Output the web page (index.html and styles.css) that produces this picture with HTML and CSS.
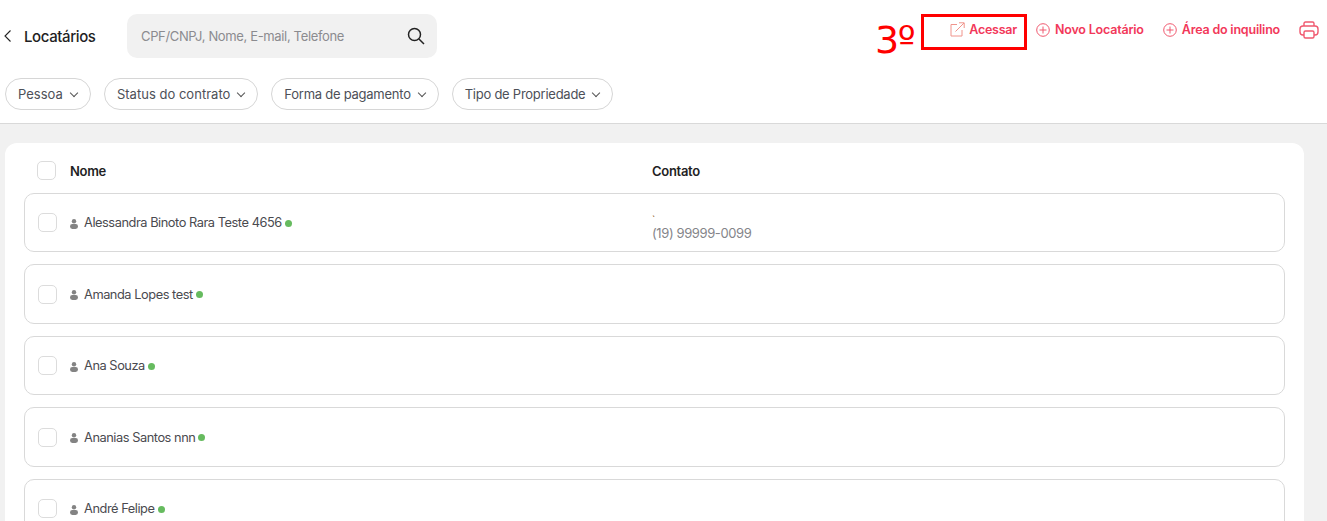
FILE: index.html

```html
<!DOCTYPE html>
<html lang="pt-BR">
<head>
    <meta charset="UTF-8">
    <title>Locatários</title>
    <link rel="stylesheet" href="styles.css">
</head>
<body>
    <header class="topo">
        <div class="linha">
            <div class="titulo">
                <svg class="voltar" width="10" height="14" viewBox="0 0 10 14"><path d="M7.5 1.5 2 7l5.5 5.5" fill="none" stroke="#222" stroke-width="1.1"/></svg>
                <h1>Locatários</h1>
            </div>
            <div class="busca">
                <span>CPF/CNPJ, Nome, E-mail, Telefone</span>
                <svg width="20" height="20" viewBox="0 0 20 20"><circle cx="8.5" cy="8.5" r="6" fill="none" stroke="#222" stroke-width="1.5"/><path d="m13 13 5 5" stroke="#222" stroke-width="1.5"/></svg>
            </div>
            <nav class="acoes">
                <a class="acao acessar">
                    <svg width="15" height="15" viewBox="0 0 15 15" fill="none" stroke="#f0948c" stroke-width="1"><path d="M7 2.5H1V14h11V8"/><path d="M5.5 9.5 14 1M9 .8h5.200V6"/></svg>
                    Acessar
                </a>
                <a class="acao">
                    <svg width="14" height="14" viewBox="0 0 14 14" fill="none" stroke="#f0596f" stroke-width="1"><circle cx="7" cy="7" r="6.3"/><path d="M3.5 7h7M7 3.5v7"/></svg>
                    Novo Locatário
                </a>
                <a class="acao">
                    <svg width="14" height="14" viewBox="0 0 14 14" fill="none" stroke="#f0596f" stroke-width="1"><circle cx="7" cy="7" r="6.3"/><path d="M3.5 7h7M7 3.5v7"/></svg>
                    Área do inquilino
                </a>
                <svg class="imprimir" width="20" height="18" viewBox="0 0 20 18" fill="none" stroke="#f0596f" stroke-width="1.4"><path d="M5 5V2.500C5 1.500 5.500 1 6.500 1h7c1 0 1.500.5 1.500 1.500V5"/><rect x="1" y="5" width="18" height="9" rx="3"/><rect x="5" y="10" width="10" height="7" rx="1.5" fill="#fff"/></svg>
            </nav>
        </div>
        <div class="filtros">
            <button class="filtro largo">Pessoa <i class="seta"></i></button>
            <button class="filtro largo">Status do contrato <i class="seta"></i></button>
            <button class="filtro">Forma de pagamento <i class="seta"></i></button>
            <button class="filtro">Tipo de Propriedade <i class="seta"></i></button>
        </div>
    </header>

    <main class="conteudo">
        <section class="cartao">
            <div class="cabecalho">
                <span class="check"></span>
                <div class="col-nome">Nome</div>
                <div class="col-contato">Contato</div>
            </div>
            <div class="registro">
                <span class="check"></span>
                <div class="col-nome nome"><svg class="pessoa" width="8" height="10" viewBox="0 0 8 10"><circle cx="4" cy="2.200" r="2.200"/><rect y="5" width="8" height="5" rx="2.400"/></svg>Alessandra Binoto Rara Teste 4656<i class="ativo"></i></div>
                <div class="col-contato telefone"><span class="virgula">`</span>(19) 99999-0099</div>
            </div>
            <div class="registro">
                <span class="check"></span>
                <div class="col-nome nome"><svg class="pessoa" width="8" height="10" viewBox="0 0 8 10"><circle cx="4" cy="2.200" r="2.200"/><rect y="5" width="8" height="5" rx="2.400"/></svg>Amanda Lopes test<i class="ativo"></i></div>
            </div>
            <div class="registro">
                <span class="check"></span>
                <div class="col-nome nome"><svg class="pessoa" width="8" height="10" viewBox="0 0 8 10"><circle cx="4" cy="2.200" r="2.200"/><rect y="5" width="8" height="5" rx="2.400"/></svg>Ana Souza<i class="ativo"></i></div>
            </div>
            <div class="registro">
                <span class="check"></span>
                <div class="col-nome nome"><svg class="pessoa" width="8" height="10" viewBox="0 0 8 10"><circle cx="4" cy="2.200" r="2.200"/><rect y="5" width="8" height="5" rx="2.400"/></svg>Ananias Santos nnn<i class="ativo"></i></div>
            </div>
            <div class="registro">
                <span class="check"></span>
                <div class="col-nome nome"><svg class="pessoa" width="8" height="10" viewBox="0 0 8 10"><circle cx="4" cy="2.200" r="2.200"/><rect y="5" width="8" height="5" rx="2.400"/></svg>André Felipe<i class="ativo"></i></div>
            </div>
        </section>
    </main>

    <div class="marca-numero">3º</div>
    <div class="marca-caixa"></div>
</body>
</html>
```

FILE: styles.css

```css
html, body {
    height: 100%;
}

body {
    margin: 0;
    font-family: "Inter", "Liberation Sans", sans-serif;
    background-color: #fff;
    color: #4a4a4f;
    overflow: hidden;
    position: relative;
}

.topo {
    height: 123px;
    border-bottom: 1px solid #d9d9d9;
    background: #fff;
}

.linha {
    display: flex;
    height: 72px;
    padding-top: 14px;
    box-sizing: border-box;
}

.titulo {
    display: flex;
    align-items: center;
    height: 44px;
    width: 127px;
    padding-left: 3px;
    box-sizing: border-box;
}

.voltar {
    margin-right: 11px;
}

h1 {
    margin: 0;
    font-size: 15px;
    font-weight: 500;
    color: #1f1f24;
    letter-spacing: -0.4px;
}

.busca {
    display: flex;
    align-items: center;
    justify-content: space-between;
    width: 310px;
    height: 44px;
    padding: 0 11px 0 14px;
    box-sizing: border-box;
    border-radius: 10px;
    background: #f1f1f1;
    font-size: 13px;
    letter-spacing: -0.35px;
    color: #8b8b8f;
}

.acoes {
    display: flex;
    align-items: flex-start;
    margin-left: auto;
    padding-top: 8px;
    padding-right: 8px;
}

.acao {
    display: flex;
    align-items: center;
    gap: 5px;
    margin-right: 19px;
    font-size: 12.5px;
    font-weight: 600;
    letter-spacing: -0.2px;
    color: #f2385a;
    white-space: nowrap;
}

.acao.acessar {
    letter-spacing: -0.25px;
    gap: 4px;
}

.imprimir {
    margin-top: -1px;
}

.filtros {
    display: flex;
    gap: 13px;
    padding-left: 5px;
    margin-top: 6px;
}

.filtro {
    display: flex;
    align-items: center;
    gap: 8px;
    height: 32px;
    padding: 0 13px 0 12px;
    border: 1px solid #d6d6d6;
    border-radius: 16px;
    background: #fff;
    font-family: inherit;
    font-size: 13px;
    font-weight: 400;
    letter-spacing: -0.25px;
    color: #4d5058;
}

.filtro.largo {
    letter-spacing: 0.02px;
}

.seta {
    width: 5px;
    height: 5px;
    margin-top: -3px;
    border-right: 1px solid #555;
    border-bottom: 1px solid #555;
    transform: rotate(45deg);
}

.conteudo {
    height: 397px;
    box-sizing: border-box;
    overflow: hidden;
    padding: 19px 23px 0 5px;
    background: #f1f1f1;
}

.cartao {
    padding: 0 19px;
    height: 378px;
    overflow: hidden;
    border-radius: 12px 12px 0 0;
    background: #fff;
}

.cabecalho {
    display: flex;
    align-items: center;
    height: 49.8px;
    padding-top: 6px;
    padding-left: 13px;
    box-sizing: border-box;
    font-size: 13px;
    font-weight: 600;
    letter-spacing: -0.3px;
    color: #1f1f24;
}

.cabecalho .col-nome {
    width: 582px;
    margin-left: 14px;
}

.registro {
    display: flex;
    align-items: center;
    height: 59.5px;
    margin-bottom: 12px;
    padding-left: 13px;
    box-sizing: border-box;
    border: 1px solid #d9d9d9;
    border-radius: 10px;
}

.check {
    flex: none;
    width: 17px;
    height: 17px;
    border: 1px solid #dcdcdc;
    border-radius: 5px;
    background: #fff;
}

.registro .col-nome {
    width: 582px;
    margin-left: 13px;
    flex: none;
}

.nome {
    display: flex;
    align-items: center;
    font-size: 12.8px;
    letter-spacing: -0.45px;
    color: #4a4a4f;
}

.pessoa {
    margin-right: 6px;
    margin-top: 2px;
    fill: #838383;
}

.ativo {
    width: 7px;
    height: 7px;
    margin-left: 3px;
    margin-top: 1px;
    border-radius: 50%;
    background: #66bb5f;
}

.telefone {
    display: flex;
    flex-direction: column;
    font-size: 13px;
    letter-spacing: -0.4px;
    color: #85858a;
    line-height: 16px;
    padding-top: 6px;
}

.virgula {
    height: 14px;
    line-height: 16px;
    font-size: 10px;
    color: #8a5a20;
}

/* anotacao em vermelho sobre a tela */
.marca-numero {
    position: absolute;
    left: 875px;
    top: 17px;
    font-family: "DejaVu Sans", sans-serif;
    font-size: 38px;
    line-height: 46px;
    letter-spacing: -1.5px;
    color: #f00;
}

.marca-caixa {
    position: absolute;
    left: 921px;
    top: 14px;
    width: 106px;
    height: 36px;
    box-sizing: border-box;
    border: 3px solid #f00;
}
```
